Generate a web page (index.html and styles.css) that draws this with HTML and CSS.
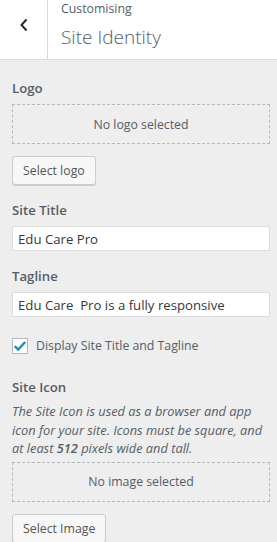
FILE: index.html
```html
<!DOCTYPE html>
<html lang="en">
<head>
    <meta charset="UTF-8">
    <meta name="viewport" content="width=device-width, initial-scale=1.0">
    <title>Customising Site Identity</title>
    <link rel="stylesheet" href="styles.css">
</head>
<body>
    <div class="panel">
        <div class="panel-header">
            <button class="back-btn" type="button" aria-label="Back">
                <svg width="10" height="14" viewBox="0 0 10 14">
                    <path d="M7.5 1.5L2.5 7l5 5.5" fill="none" stroke="#23282d" stroke-width="2"/>
                </svg>
            </button>
            <div class="panel-title">
                <span class="crumb">Customising</span>
                <h1>Site Identity</h1>
            </div>
        </div>

        <div class="panel-body">
            <div class="control">
                <span class="control-label">Logo</span>
                <div class="placeholder">No logo selected</div>
                <button class="btn" type="button">Select logo</button>
            </div>

            <div class="control">
                <label class="control-label" for="blogname">Site Title</label>
                <input type="text" id="blogname" value="Edu Care Pro">
            </div>

            <div class="control">
                <label class="control-label" for="blogdescription">Tagline</label>
                <input type="text" id="blogdescription" value="Edu Care  Pro is a fully responsive">
            </div>

            <div class="control control-check">
                <label class="checkbox-row">
                    <span class="checkbox">
                        <svg width="14" height="14" viewBox="0 0 14 14">
                            <path d="M1.8 7.2l3.4 3.4L12.2 3" fill="none" stroke="#1e8cbe" stroke-width="2.4"/>
                        </svg>
                    </span>
                    Display Site Title and Tagline
                </label>
            </div>

            <div class="control">
                <span class="control-label">Site Icon</span>
                <p class="description">The Site Icon is used as a browser and app icon for your site. Icons must be square, and at least <strong>512</strong> pixels wide and tall.</p>
                <div class="placeholder">No image selected</div>
                <button class="btn" type="button">Select Image</button>
            </div>
        </div>
    </div>
</body>
</html>
```

FILE: styles.css
```css
* {
    box-sizing: border-box;
    margin: 0;
    padding: 0;
}

body {
    font-family: 'Open Sans', sans-serif;
    font-size: 12.3px;
    background-color: #eeeeee;
    color: #555d66;
    width: 277px;
    height: 542px;
    overflow: hidden;
}

.panel-header {
    display: flex;
    height: 60px;
    background: white;
    border-bottom: 1px solid #dddddd;
}

.back-btn {
    width: 48px;
    flex: none;
    background: white;
    border: none;
    border-right: 1px solid #dddddd;
    display: flex;
    align-items: center;
    justify-content: center;
    padding-bottom: 10px;
}

.panel-title {
    padding: 0 0 0 13px;
}

.crumb {
    display: block;
    font-size: 12.3px;
    line-height: 18px;
}

h1 {
    font-size: 19px;
    font-weight: 300;
    line-height: 26px;
    margin-top: 6px;
}

.panel-body {
    padding: 18px 7px 0 12px;
}

.control {
    margin-bottom: 15px;
}

.control-label {
    display: block;
    font-size: 13.2px;
    font-weight: 600;
    line-height: 20px;
    margin-bottom: 6px;
}

.placeholder {
    height: 40px;
    border: 1px dashed #b4b9be;
    display: flex;
    align-items: center;
    justify-content: center;
    font-size: 12.3px;
    margin-bottom: 12px;
}

.btn {
    display: block;
    font-family: inherit;
    font-size: 12.3px;
    color: #555555;
    background: #f7f7f7;
    border: 1px solid #cccccc;
    border-radius: 3px;
    box-shadow: 0 1px 0 #cccccc;
    height: 29px;
    padding: 0 10px;
}

input[type="text"] {
    display: block;
    width: 100%;
    height: 25px;
    border: 1px solid #dddddd;
    background: white;
    font-family: inherit;
    font-size: 13.2px;
    color: #32373c;
    padding: 0 5px;
}

.control-check {
    padding-top: 6px;
    margin-bottom: 23px;
}

.checkbox-row {
    display: flex;
    align-items: center;
    gap: 8px;
    font-size: 12.3px;
    line-height: 16px;
}

.checkbox {
    width: 16px;
    height: 16px;
    border: 1px solid #b4b9be;
    background: white;
    display: flex;
    align-items: center;
    justify-content: center;
}

.description {
    font-style: italic;
    font-size: 12.8px;
    line-height: 18.5px;
    margin-top: -1px;
    margin-bottom: 4px;
}

.description strong {
    font-weight: 600;
}
```
